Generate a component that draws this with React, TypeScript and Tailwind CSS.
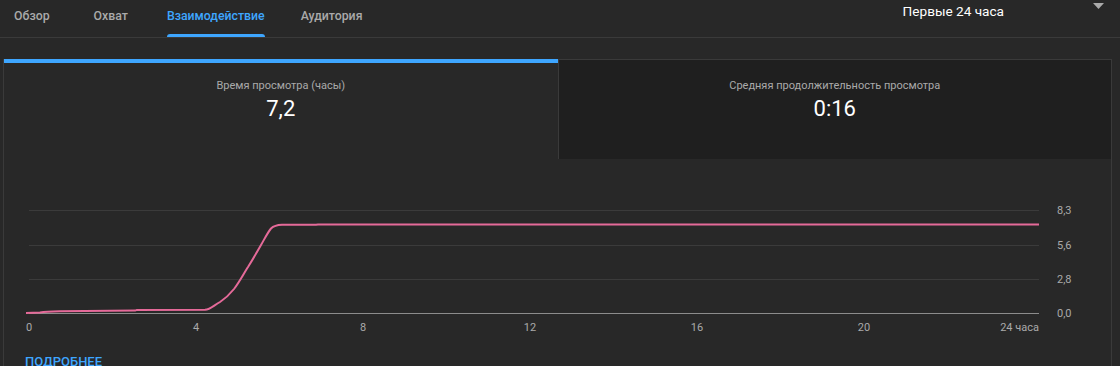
const tabs = [
  { label: "Обзор", ml: "ml-[14px]" },
  { label: "Охват", ml: "ml-[44px]" },
  { label: "Взаимодействие", ml: "ml-[39px]" },
  { label: "Аудитория", ml: "ml-[36px]" },
];

const yTicks = [
  { label: "8,3", y: 210 },
  { label: "5,6", y: 245 },
  { label: "2,8", y: 279 },
];

const xTicks = [
  { label: "0", x: 29 },
  { label: "4", x: 196 },
  { label: "8", x: 363 },
  { label: "12", x: 530 },
  { label: "16", x: 697 },
  { label: "20", x: 864 },
];

const linePath =
  "M26,313 L40,312.5 C45,311.5 50,311.3 60,311.2 L135,310.6 L137,309.9 L205,309.7 C210,309.5 213,306 220,302 C226,298 230,294 234,289 C240,281 244,273 248,267 C253,259 257,252 261,245 C265,238 268,232 271,228.5 C274,225.6 277,225 282,224.8 L316,224.7 L318,224.4 L1039,224.4";

function Chart() {
  return (
    <svg width={1107} height={190} className="block">
      <g transform="translate(-4,-159)">
        {yTicks.map((t) => (
          <line key={t.label} x1={29} x2={1039} y1={t.y + 0.5} y2={t.y + 0.5} stroke="#3b3b3b" strokeWidth={1} />
        ))}
        <line x1={29} x2={1039} y1={313.5} y2={313.5} stroke="#8c8c8c" strokeWidth={1} />
        {[...yTicks, { label: "0,0", y: 313 }].map((t) => (
          <text key={t.label} x={1057} y={t.y + 4} fontSize={11} fill="#aaaaaa">
            {t.label}
          </text>
        ))}
        {xTicks.map((t) => (
          <text key={t.label} x={t.x} y={331} fontSize={11} fill="#aaaaaa" textAnchor="middle">
            {t.label}
          </text>
        ))}
        <text x={1039} y={331} fontSize={11} fill="#aaaaaa" textAnchor="end">
          24 часа
        </text>
        <path d={linePath} fill="none" stroke="#e56a99" strokeWidth={2} strokeLinejoin="round" />
      </g>
    </svg>
  );
}

function Metric({ title, value, active }: { title: string; value: string; active?: boolean }) {
  return (
    <div
      className={
        active
          ? "flex h-[100px] flex-col items-center border-t-4 border-[#3ea6ff] bg-[#282828] pt-[16px]"
          : "flex h-[100px] flex-col items-center border-t border-l border-[#3a3a3a] bg-[#1f1f1f] pt-[19px]"
      }
    >
      <div className="text-[11px] leading-[14px] text-[#aaaaaa]">{title}</div>
      <div className="mt-[3px] text-[22px] leading-[26px] text-white">{value}</div>
    </div>
  );
}

export default function App() {
  return (
    <div className="h-[366px] w-[1120px] overflow-hidden bg-[#282828] font-['Roboto',sans-serif]">
      <header className="flex h-[38px] items-stretch border-b border-[#3a3a3a]">
        <nav className="flex">
          {tabs.map((t, i) => (
            <div
              key={t.label}
              className={
                (i === 2
                  ? "relative flex items-center pb-[5px] text-[12.3px] font-medium text-[#3ea6ff] "
                  : "relative flex items-center pb-[5px] text-[12.3px] font-medium text-[#aaaaaa] ") + t.ml
              }
            >
              {t.label}
              {i === 2 && <span className="absolute right-0 bottom-0 left-0 h-[3px] rounded-t-sm bg-[#3ea6ff]" />}
            </div>
          ))}
        </nav>
        <div className="ml-auto flex items-start pt-[3px] pr-[16px]">
          <span className="mr-[89px] text-[13.6px] leading-[17px] text-white">Первые 24 часа</span>
          <svg width={11} height={6} viewBox="0 0 11 6">
            <path d="M0 0 L11 0 L5.5 6 Z" fill="#aaaaaa" />
          </svg>
        </div>
      </header>

      <div className="mt-[21px] ml-[3px] w-[1109px] border-r border-l border-[#3a3a3a]">
        <div className="grid grid-cols-2">
          <Metric title="Время просмотра (часы)" value="7,2" active />
          <Metric title="Средняя продолжительность просмотра" value="0:16" />
        </div>
        <Chart />
        <div className="pt-[5px] pl-[21px] text-[13px] font-medium uppercase leading-[15px] text-[#3ea6ff]">
          Подробнее
        </div>
      </div>
    </div>
  );
}
